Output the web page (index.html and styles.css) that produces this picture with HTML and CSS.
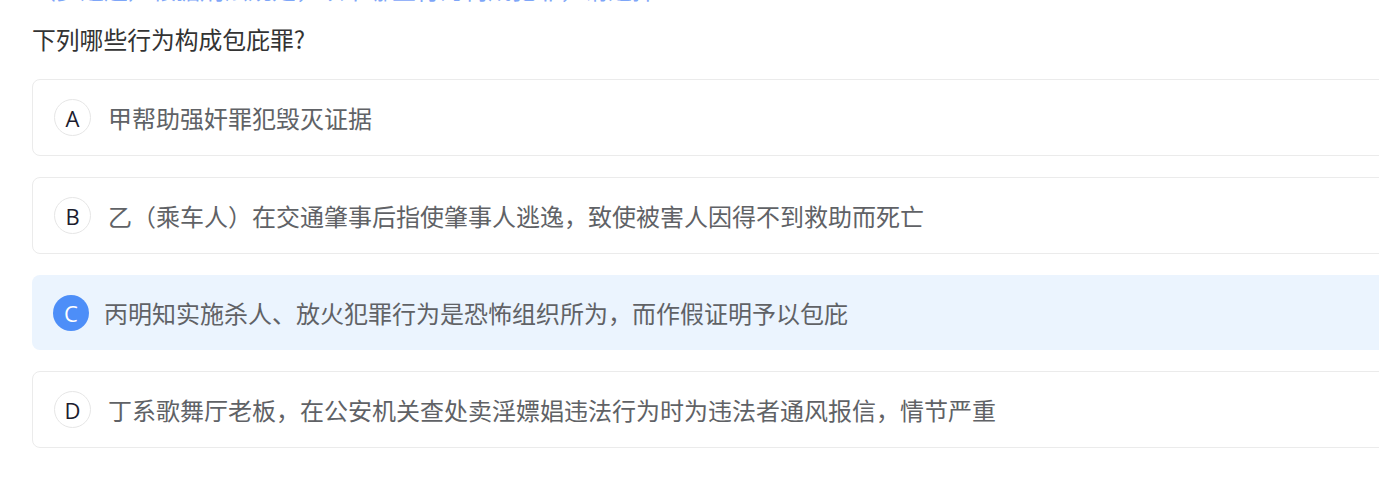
FILE: index.html
```html
<!DOCTYPE html>
<html lang="zh-CN">
<head>
<meta charset="utf-8">
<title>包庇罪</title>
<link rel="stylesheet" href="styles.css">
</head>
<body>
<div class="page">
  <div class="prev">（多选题）根据刑法规定，以下哪些行为构成犯罪，请选择</div>
  <h2 class="question">下列哪些行为构成包庇罪?</h2>
  <ul class="options">
    <li class="option"><span class="letter">A</span><span class="text">甲帮助强奸罪犯毁灭证据</span></li>
    <li class="option"><span class="letter">B</span><span class="text">乙（乘车人）在交通肇事后指使肇事人逃逸，致使被害人因得不到救助而死亡</span></li>
    <li class="option selected"><span class="letter">C</span><span class="text">丙明知实施杀人、放火犯罪行为是恐怖组织所为，而作假证明予以包庇</span></li>
    <li class="option"><span class="letter">D</span><span class="text">丁系歌舞厅老板，在公安机关查处卖淫嫖娼违法行为时为违法者通风报信，情节严重</span></li>
  </ul>
</div>
</body>
</html>
```

FILE: styles.css
```css
html, body {
  margin: 0;
  padding: 0;
  background: #ffffff;
  overflow: hidden;
}
body {
  font-family: "Noto Sans CJK SC", "Noto Sans", sans-serif;
}
.page {
  padding-left: 32px;
  width: 1400px;
}
.prev {
  margin-top: -23px;
  height: 23px;
  font-size: 24px;
  line-height: 24px;
  color: #7ea6f8;
  white-space: nowrap;
}
.question {
  margin: 21px 0 0 0;
  font-size: 23.8px;
  font-weight: normal;
  line-height: 36px;
  color: #333333;
}
.options {
  list-style: none;
  margin: 22px 0 0 0;
  padding: 0;
  display: flex;
  flex-direction: column;
  gap: 21px;
}
.option {
  display: flex;
  align-items: center;
  gap: 17px;
  height: 77px;
  box-sizing: border-box;
  padding-left: 21px;
  border: 1px solid #ebebeb;
  border-radius: 8px;
  background: #ffffff;
}
.option.selected {
  height: 75px;
  background: #ebf4fe;
  border: none;
  gap: 15px;
  padding-left: 21px;
}
.letter {
  flex: none;
  width: 37px;
  height: 37px;
  box-sizing: border-box;
  border: 1px solid #e6e6e6;
  border-radius: 50%;
  display: flex;
  align-items: center;
  justify-content: center;
  font-family: "Open Sans", "Liberation Sans", sans-serif;
  font-size: 22px;
  color: #1c1c2e;
  background: #ffffff;
}
.option.selected .letter {
  width: 36px;
  height: 36px;
  background: #4d8ef8;
  border: none;
  color: #ffffff;
}
.text {
  font-size: 24px;
  line-height: 32px;
  color: #606266;
  white-space: nowrap;
}
```
